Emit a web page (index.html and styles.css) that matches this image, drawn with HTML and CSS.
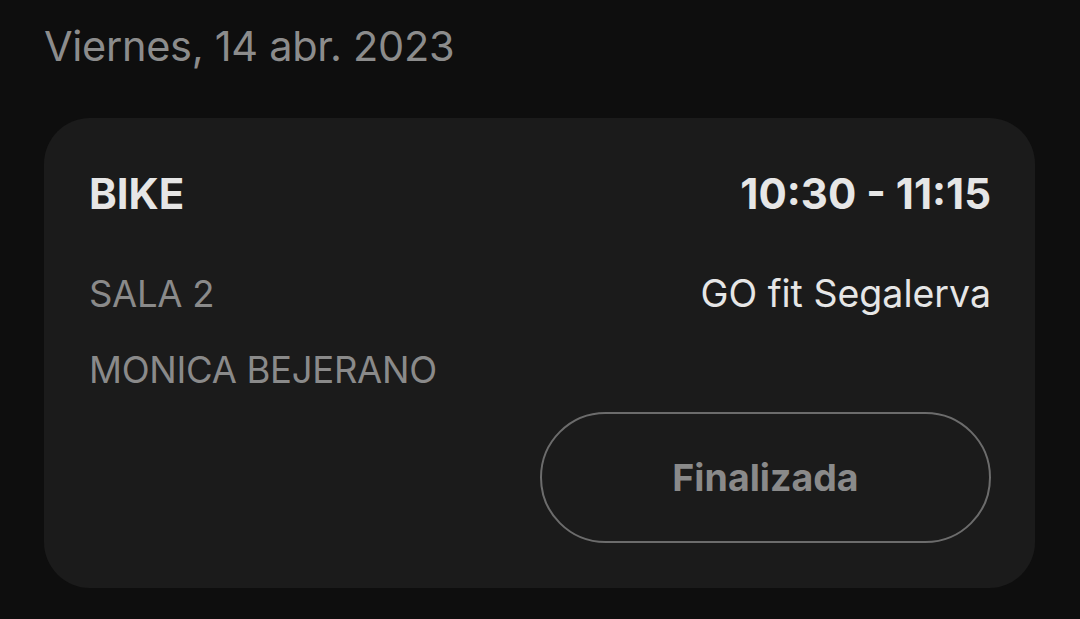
FILE: index.html
```html
<!DOCTYPE html>
<html lang="es">
<head>
<meta charset="utf-8">
<link rel="stylesheet" href="styles.css">
</head>
<body>
<div class="page">
  <div class="date">Viernes, 14 abr. 2023</div>
  <div class="card">
    <div class="row head">
      <div class="title">BIKE</div>
      <div class="time">10:30 - 11:15</div>
    </div>
    <div class="row info">
      <div class="muted">SALA 2</div>
      <div class="place">GO fit Segalerva</div>
    </div>
    <div class="row info2">
      <div class="muted">MONICA BEJERANO</div>
    </div>
    <div class="actions">
      <div class="btn">Finalizada</div>
    </div>
  </div>
</div>
</body>
</html>
```
FILE: styles.css
```css
html, body {
  margin: 0;
  padding: 0;
  background: #0e0e0e;
  height: 100%;
  overflow: hidden;
}
.page {
  font-family: "Inter", "Roboto", sans-serif;
  padding: 18px 45px 0 44px;
}
.date {
  font-size: 41.5px;
  line-height: 56px;
  color: #8c8c8c;
  letter-spacing: -0.3px;
}
.card {
  margin-top: 44px;
  background: #1b1b1b;
  border-radius: 46px;
  padding: 50px 44px 44px 45px;
  height: 470px;
  box-sizing: border-box;
}
.row {
  display: flex;
  justify-content: space-between;
  align-items: baseline;
}
.title, .time {
  font-size: 42px;
  font-weight: 700;
  color: #e6e6e6;
  line-height: 52px;
}
.info {
  margin-top: 52px;
}
.muted {
  font-size: 36.5px;
  line-height: 44px;
  color: #8a8a8a;
  letter-spacing: -0.3px;
}
.place {
  font-size: 37.5px;
  line-height: 44px;
  color: #e6e6e6;
}
.info2 {
  margin-top: 32px;
}
.actions {
  display: flex;
  justify-content: flex-end;
  margin-top: 20px;
}
.btn {
  width: 451px;
  height: 131px;
  box-sizing: border-box;
  border: 2px solid #6c6c6c;
  border-radius: 66px;
  display: flex;
  align-items: center;
  justify-content: center;
  font-size: 37.5px;
  font-weight: 700;
  color: #8a8a8a;
}
```
